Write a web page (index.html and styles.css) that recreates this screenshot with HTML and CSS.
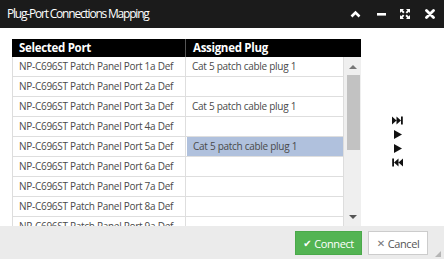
FILE: index.html
```html
<!DOCTYPE html>
<html>
<head>
<meta charset="utf-8">
<link rel="stylesheet" href="styles.css">
</head>
<body>
<div class="window">
  <div class="titlebar">
    <span class="title">Plug-Port Connections Mapping</span>
    <div class="tools">
      <svg class="ti" width="11" height="8" viewBox="0 0 11 8"><path d="M1.5 6.5 L5.5 2.5 L9.5 6.5" fill="none" stroke="#fff" stroke-width="2.6"/></svg>
      <svg class="ti" width="9" height="8" viewBox="0 0 9 8"><rect x="0" y="3" width="9" height="2.6" fill="#fff"/></svg>
      <svg class="ti" width="10" height="10" viewBox="0 0 10 10"><g fill="#fff"><path d="M0 0h4l-1.2 1.2 1.8 1.8-1.4 1.4-1.8-1.8L0 4z"/><path d="M10 0v4l-1.2-1.2-1.8 1.8-1.4-1.4 1.8-1.8L6 0z"/><path d="M0 10V6l1.2 1.2 1.8-1.8 1.4 1.4-1.8 1.8L4 10z"/><path d="M10 10H6l1.2-1.2-1.8-1.8 1.4-1.4 1.8 1.8L10 6z"/></g></svg>
      <svg class="ti" width="10" height="10" viewBox="0 0 10 10"><path d="M1.5 1.5 L8.5 8.5 M8.5 1.5 L1.5 8.5" stroke="#fff" stroke-width="2.8" stroke-linecap="round"/></svg>
    </div>
  </div>
  <div class="content">
    <div class="grid">
      <div class="head">
        <div class="hc c1">Selected Port</div>
        <div class="hc c2">Assigned Plug</div>
      </div>
      <div class="body">
        <div class="rows">
          <div class="row"><div class="cell c1">NP-C696ST Patch Panel Port 1a Def</div><div class="cell c2">Cat 5 patch cable plug 1</div></div>
          <div class="row"><div class="cell c1">NP-C696ST Patch Panel Port 2a Def</div><div class="cell c2"></div></div>
          <div class="row"><div class="cell c1">NP-C696ST Patch Panel Port 3a Def</div><div class="cell c2">Cat 5 patch cable plug 1</div></div>
          <div class="row"><div class="cell c1">NP-C696ST Patch Panel Port 4a Def</div><div class="cell c2"></div></div>
          <div class="row"><div class="cell c1">NP-C696ST Patch Panel Port 5a Def</div><div class="cell c2 sel">Cat 5 patch cable plug 1</div></div>
          <div class="row"><div class="cell c1">NP-C696ST Patch Panel Port 6a Def</div><div class="cell c2"></div></div>
          <div class="row"><div class="cell c1">NP-C696ST Patch Panel Port 7a Def</div><div class="cell c2"></div></div>
          <div class="row"><div class="cell c1">NP-C696ST Patch Panel Port 8a Def</div><div class="cell c2"></div></div>
          <div class="row"><div class="cell c1">NP-C696ST Patch Panel Port 9a Def</div><div class="cell c2"></div></div>
        </div>
        <div class="scrollbar">
          <div class="arrow up"></div>
          <div class="thumb"></div>
          <div class="spacer"></div>
          <div class="arrow down"></div>
        </div>
      </div>
    </div>
    <div class="side">
      <svg width="11" height="9" viewBox="0 0 11 9"><path d="M0 0.5 L4.5 4.5 L0 8.5z M4.5 0.5 L9 4.5 L4.5 8.5z" fill="#111"/><rect x="9" y="0.5" width="1.8" height="8" fill="#111"/></svg>
      <svg width="11" height="9" viewBox="0 0 11 9"><path d="M2 0 L10 4.5 L2 9z" fill="#111"/></svg>
      <svg width="11" height="9" viewBox="0 0 11 9"><path d="M2 0 L10 4.5 L2 9z" fill="#111"/></svg>
      <svg width="11" height="9" viewBox="0 0 11 9"><rect x="0.2" y="0.5" width="1.8" height="8" fill="#111"/><path d="M6.5 0.5 L2 4.5 L6.5 8.5z M11 0.5 L6.5 4.5 L11 8.5z" fill="#111"/></svg>
    </div>
  </div>
  <div class="footer">
    <button class="btn ok"><span class="ic">&#10004;</span>Connect</button>
    <button class="btn cancel"><span class="ic2">&#10005;</span>Cancel</button>
    <span class="grip"></span>
  </div>
</div>
</body>
</html>
```
FILE: styles.css
```css
* { box-sizing: border-box; }
html, body { margin: 0; padding: 0; }
body { font-family: "Open Sans", "DejaVu Sans", sans-serif; background: #fff; }
.window { width: 444px; height: 259px; display: flex; flex-direction: column; position: relative; overflow: hidden; }
.titlebar { height: 28px; background: #1b1b1b; color: #fff; display: flex; align-items: center; padding: 0 9px 0 7px; flex: none; }
.title { font-size: 12px; letter-spacing: -1.2px; flex: 1; margin-top: -2px; }
.tools { display: flex; align-items: center; gap: 0; }
.ti { display: block; }
.tools .ti:nth-child(1) { margin-right: 16px; }
.tools .ti:nth-child(2) { margin-right: 14px; }
.tools .ti:nth-child(3) { margin-right: 15px; }
.content { flex: 1; display: flex; padding: 11px 0 0 12px; background: #fff; overflow: hidden; min-height: 0; }
.grid { width: 349px; flex: none; display: flex; flex-direction: column; }
.head { display: flex; height: 18px; background: #000; color: #fff; font-weight: bold; font-size: 11.5px; letter-spacing: -0.3px; flex: none; }
.hc { padding-left: 7px; line-height: 18px; }
.head .c1 { width: 174px; border-right: 1px solid #555; }
.head .c2 { flex: 1; }
.body { flex: 1; display: flex; min-height: 0; overflow: hidden; }
.rows { width: 332px; border-left: 1px solid #ddd; border-right: 1px solid #ddd; overflow: hidden; }
.row { display: flex; height: 20px; border-bottom: 1px solid #dedede; }
.cell { font-size: 10px; letter-spacing: -0.28px; color: #4a4a4a; line-height: 19px; padding-left: 6px; white-space: nowrap; }
.row .c1 { width: 173px; border-right: 1px solid #dedede; }
.row .c2 { flex: 1; }
.row .sel { background: #b0c1dd; margin: 0 0 0 1px; }
.scrollbar { width: 17px; background: #efefef; display: flex; flex-direction: column; align-items: center; }
.arrow { width: 0; height: 0; border-left: 4px solid transparent; border-right: 4px solid transparent; }
.arrow.up { border-bottom: 4px solid #777; margin-top: 8px; }
.arrow.down { border-top: 4px solid #555; margin-bottom: 7px; }
.thumb { width: 13px; height: 75px; background: #c2c2c2; margin-top: 6px; margin-left: 2px; }
.spacer { flex: 1; }
.side { display: flex; flex-direction: column; gap: 5px; margin-left: 31px; padding-top: 77px; }
.side svg { display: block; }
.footer { height: 33px; flex: none; background: #ebebeb; display: flex; align-items: center; justify-content: flex-end; padding-right: 16px; gap: 6px; padding-top: 1px; }
.btn { height: 24px; font-family: "Open Sans", "DejaVu Sans", sans-serif; font-size: 11px; letter-spacing: -0.4px; padding: 0; display: flex; align-items: center; justify-content: center; cursor: pointer; }
.ok { width: 67px; background: #53b453; color: #fff; border: 1px solid #4aa94a; }
.cancel { width: 60px; background: #fff; color: #555; border: 1px solid #ccc; }
.ic { font-size: 10px; margin-right: 3px; }
.ic2 { font-size: 10px; margin-right: 3px; color: #777; }
.grip { position: absolute; right: 3px; bottom: 2px; width: 6px; height: 6px; background: radial-gradient(circle, #777 0.6px, transparent 0.8px) 0 0 / 2px 2px; clip-path: polygon(100% 0, 100% 100%, 0 100%); }
```
